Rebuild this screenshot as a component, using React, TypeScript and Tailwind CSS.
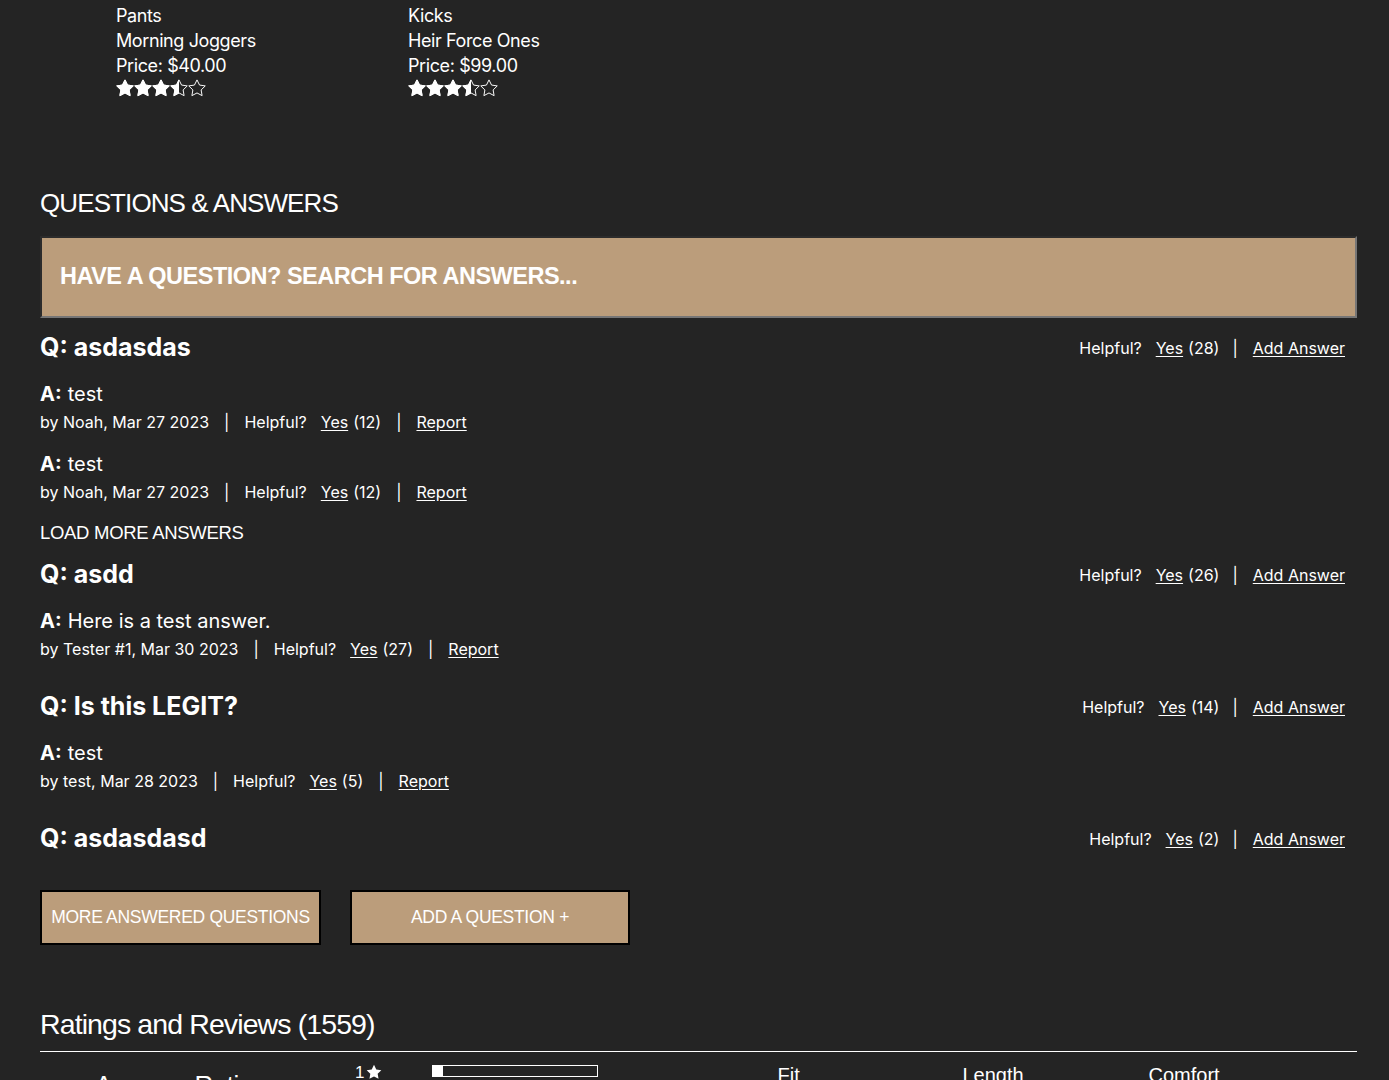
import React from 'react';

const body = { fontFamily: 'Inter, "Noto Sans", sans-serif' };
const helv = { fontFamily: '"Liberation Sans", Arial, sans-serif' };

const STAR =
    'M12 1.2l3.4 6.9 7.6 1.1-5.5 5.4 1.3 7.6L12 18.6l-6.8 3.6 1.3-7.6L1 9.2l7.6-1.1z';

const Star = ({ fill, id }: { fill: number; id: string }) => (
    <svg width="18" height="18" viewBox="0 0 24 24" className="block">
        <defs>
            <clipPath id={id}>
                <rect x="0" y="0" width={24 * fill} height="24" />
            </clipPath>
        </defs>
        <path d={STAR} fill="none" stroke="#fff" strokeWidth="1.3" strokeLinejoin="round" />
        <path d={STAR} fill="#fff" stroke="#fff" strokeWidth="1.3" strokeLinejoin="round" clipPath={`url(#${id})`} />
    </svg>
);

const Stars = ({ rating, name }: { rating: number; name: string }) => (
    <div className="flex">
        {[0, 1, 2, 3, 4].map((i) => (
            <Star key={i} id={`${name}-${i}`} fill={Math.max(0, Math.min(1, rating - i))} />
        ))}
    </div>
);

const products = [
    { id: 'p1', cat: 'Pants', name: 'Morning Joggers', price: '$40.00', rating: 3.5 },
    { id: 'p2', cat: 'Kicks', name: 'Heir Force Ones', price: '$99.00', rating: 3.5 },
];

const Sep = () => <span className="pl-[15px] pr-[15px]">|</span>;

const Meta = ({ by, yes }: { by: string; yes: number }) => (
    <div className="flex items-center h-[22px] text-[16px] text-white" style={body}>
        <span>{by}</span>
        <Sep />
        <span>Helpful?</span>
        <span className="ml-[14px] underline underline-offset-2">Yes</span>
        <span className="ml-[5px]">({yes})</span>
        <Sep />
        <span className="underline underline-offset-2">Report</span>
    </div>
);

const Answer = ({ text, by, yes }: { text: string; by: string; yes: number }) => (
    <div className="pt-[18px]">
        <div className="h-[26px] flex items-center text-[20px] text-white" style={body}>
            <span className="font-bold mr-[6px]">A:</span>
            <span>{text}</span>
        </div>
        <div className="mt-[4px]">
            <Meta by={by} yes={yes} />
        </div>
    </div>
);

const QRow = ({ q, yes }: { q: string; yes: number }) => (
    <div className="flex items-center justify-between h-[30px] pr-[12px] text-white" style={body}>
        <div className="text-[25px] font-bold">Q: {q}</div>
        <div className="flex items-center text-[16px]">
            <span>Helpful?</span>
            <span className="ml-[14px] underline underline-offset-2">Yes</span>
            <span className="ml-[5px]">({yes})</span>
            <span className="pl-[13px] pr-[15px]">|</span>
            <span className="underline underline-offset-2">Add Answer</span>
        </div>
    </div>
);

export default function App() {
    return (
        <div className="min-h-screen bg-[#242424] text-white overflow-hidden">
            <div className="flex pl-[116px] pt-[3px]">
                {products.map((p) => (
                    <div
                        key={p.id}
                        className="w-[292px] text-[18px] leading-[25px] tracking-[-0.4px]"
                        style={body}
                    >
                        <div>{p.cat}</div>
                        <div>{p.name}</div>
                        <div>Price: {p.price}</div>
                        <div className="mt-[1px]">
                            <Stars rating={p.rating} name={p.id} />
                        </div>
                    </div>
                ))}
            </div>

            <div className="pl-[40px] pr-[32px]">
                <h2
                    className="mt-[91px] h-[30px] flex items-center text-[26px] tracking-[-0.9px]"
                    style={helv}
                >
                    QUESTIONS &amp; ANSWERS
                </h2>
                <div className="mt-[18px] h-[82px] bg-[#bb9d7b] border-2 border-t-[#2c2c2c] border-l-[#2c2c2c] border-r-[#767676] border-b-[#767676] flex items-center pl-[18px]">
                    <span className="text-[23.5px] font-bold tracking-[-0.5px] text-white" style={helv}>
                        HAVE A QUESTION? SEARCH FOR ANSWERS...
                    </span>
                </div>

                <div className="mt-[15px]">
                    <QRow q="asdasdas" yes={28} />
                    <Answer text="test" by="by Noah, Mar 27 2023" yes={12} />
                    <Answer text="test" by="by Noah, Mar 27 2023" yes={12} />
                    <div
                        className="mt-[19px] h-[22px] flex items-center text-[18.5px] tracking-[-0.3px]"
                        style={helv}
                    >
                        LOAD MORE ANSWERS
                    </div>
                </div>

                <div className="mt-[16px]">
                    <QRow q="asdd" yes={26} />
                    <Answer text="Here is a test answer." by="by Tester #1, Mar 30 2023" yes={27} />
                </div>

                <div className="mt-[32px]">
                    <QRow q="Is this LEGIT?" yes={14} />
                    <Answer text="test" by="by test, Mar 28 2023" yes={5} />
                </div>

                <div className="mt-[32px]">
                    <QRow q="asdasdasd" yes={2} />
                </div>

                <div className="mt-[36px] flex gap-[29px]" style={helv}>
                    <button className="w-[281px] h-[55px] bg-[#bb9d7b] border-2 border-black text-white text-[17.5px] tracking-[-0.3px]">
                        MORE ANSWERED QUESTIONS
                    </button>
                    <button className="w-[280px] h-[55px] bg-[#bb9d7b] border-2 border-black text-white text-[17.5px] tracking-[-0.3px]">
                        ADD A QUESTION +
                    </button>
                </div>

                <h2
                    className="mt-[63px] h-[32px] flex items-center text-[28.5px] tracking-[-0.9px]"
                    style={helv}
                >
                    Ratings and Reviews (1559)
                </h2>
                <div className="mt-[11px] border-t border-white" />

                <div className="flex mt-[12px]" style={helv}>
                    <div className="w-[315px] pl-[55px] pt-[6px] text-[26px] leading-[30px] tracking-[-0.5px]">
                        Average Rating
                    </div>
                    <div className="flex items-start gap-[2px] text-[17px] leading-[18px]">
                        <span>1</span>
                        <svg width="16" height="16" viewBox="0 0 24 24">
                            <path d={STAR} fill="#fff" />
                        </svg>
                    </div>
                    <div className="ml-[50px] mt-[1px] w-[166px] h-[12px] border border-white flex">
                        <div className="w-[10px] bg-white" />
                    </div>
                    <div className="ml-[179px] flex text-[20px] leading-[22px]">
                        <div className="w-[185px]">Fit</div>
                        <div className="w-[186px]">Length</div>
                        <div>Comfort</div>
                    </div>
                </div>
            </div>
        </div>
    );
}
